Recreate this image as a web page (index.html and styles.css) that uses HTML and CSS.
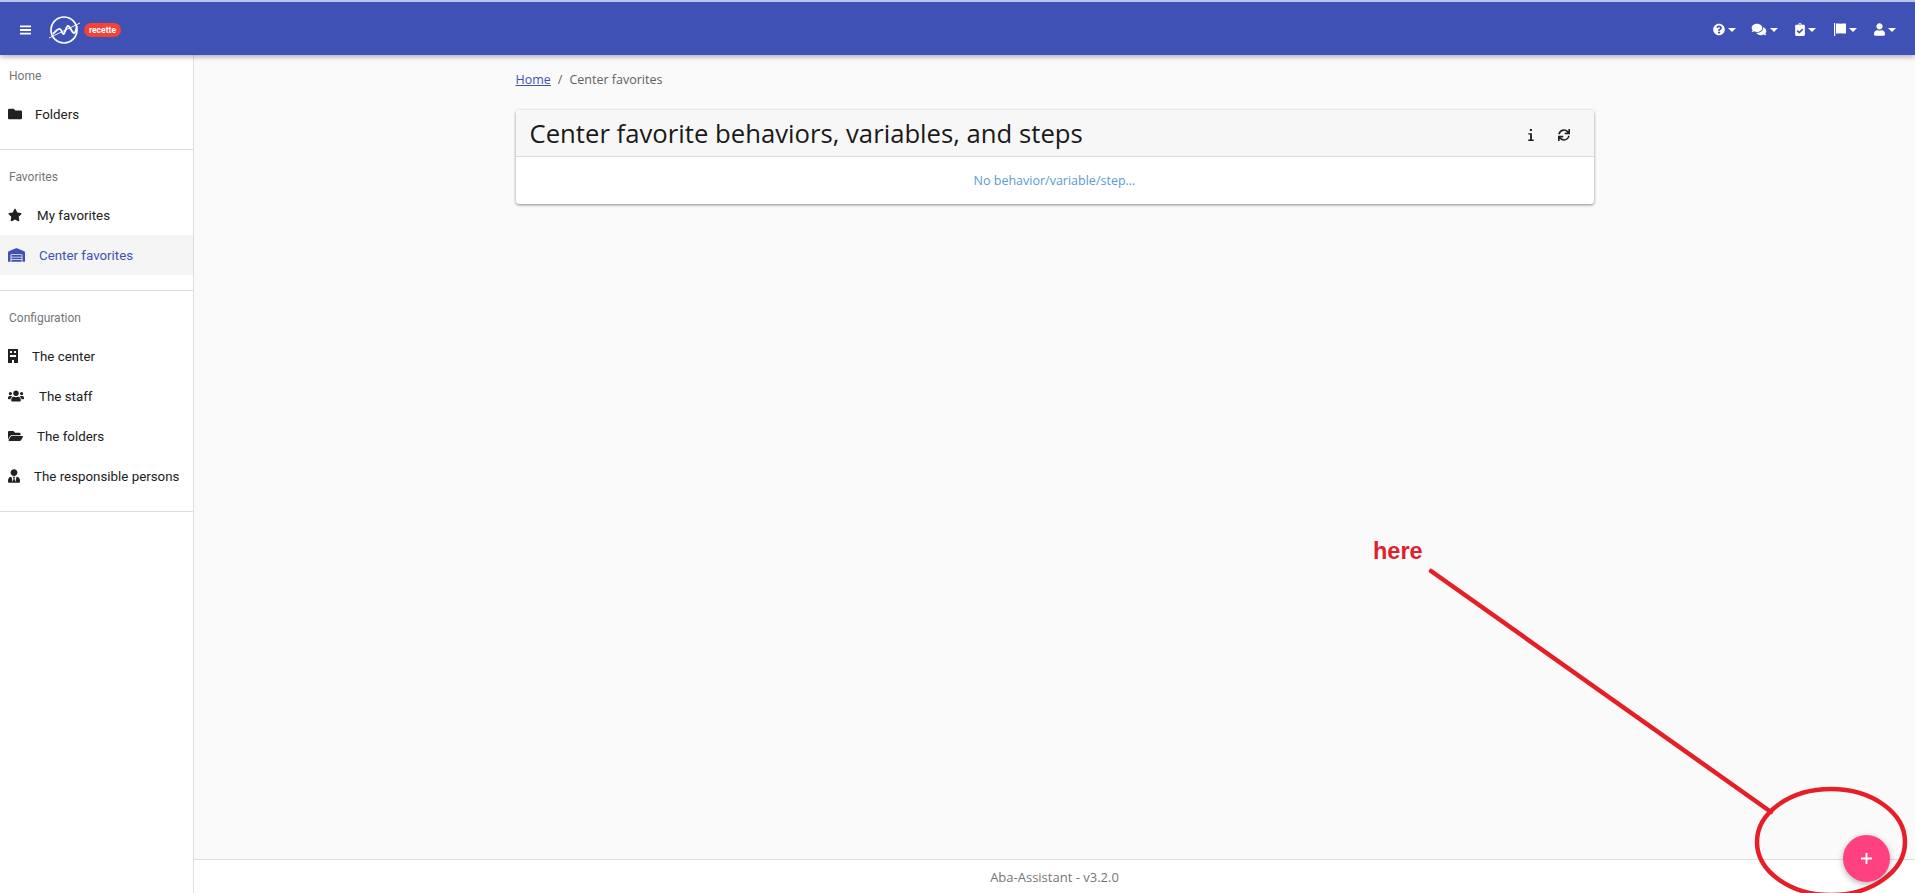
FILE: index.html
```html
<!DOCTYPE html>
<html lang="en">
<head>
  <meta charset="UTF-8" />
  <title>Center favorites - Aba-Assistant</title>
  <link rel="stylesheet" href="styles.css">
</head>
<body>

  <header class="topbar">
    <div class="topbar-left">
      <svg class="menu-icon" viewBox="0 0 12 10"><path d="M0 0h12v2H0zM0 4h12v2H0zM0 8h12v2H0z"/></svg>
      <svg class="logo" viewBox="0 0 34 34" fill="none" stroke="#fff">
        <circle cx="17" cy="17" r="13" stroke-width="1.7"/>
        <path d="M2 25L33 10" stroke-width="0.9"/>
        <path d="M6 21C9 18 11 15 13 16S15 21 16.500 21 19 13 21 13 25 20 27 20 29 15 30 13" stroke-width="1.8"/>
      </svg>
      <span class="env-badge">recette</span>
    </div>
    <nav class="topbar-right">
      <button class="top-btn btn-help"><svg viewBox="0 0 512 512"><path d="M504 256c0 136.997-111.043 248-248 248S8 392.997 8 256C8 119.083 119.043 8 256 8s248 111.083 248 248zM262.655 90c-54.497 0-89.255 22.957-116.549 63.758-3.536 5.286-2.353 12.415 2.715 16.258l34.699 26.31c5.205 3.947 12.621 3.008 16.665-2.122 17.864-22.658 30.113-35.797 57.303-35.797 20.429 0 45.698 13.148 45.698 32.958 0 14.976-12.363 22.667-32.534 33.976C247.128 238.528 216 254.941 216 296v4c0 6.627 5.373 12 12 12h56c6.627 0 12-5.373 12-12v-1.333c0-28.462 83.186-29.647 83.186-106.667 0-58.002-60.165-102-116.531-102zM256 338c-25.365 0-46 20.635-46 46 0 25.364 20.635 46 46 46s46-20.636 46-46c0-25.365-20.635-46-46-46z"/></svg><i class="caret"></i></button>
      <button class="top-btn btn-chat"><svg viewBox="0 0 576 512"><path d="M416 192c0-88.4-93.1-160-208-160S0 103.6 0 192c0 34.3 14.1 65.9 38 92-13.4 30.2-35.5 54.2-35.8 54.5-2.2 2.3-2.8 5.7-1.5 8.7S4.8 352 8 352c36.6 0 66.9-12.3 88.7-25 32.2 15.7 70.3 25 111.3 25 114.9 0 208-71.6 208-160zm122 220c23.9-26 38-57.7 38-92 0-66.9-53.5-124.2-129.3-148.1.9 6.6 1.3 13.3 1.3 20.1 0 105.9-107.7 192-240 192-10.8 0-21.3-.8-31.7-1.9C207.8 439.6 281.8 480 368 480c41 0 79.1-9.2 111.3-25 21.8 12.7 52.1 25 88.7 25 3.2 0 6.1-1.9 7.3-4.8 1.3-2.9.7-6.3-1.5-8.7-.3-.3-22.4-24.2-35.8-54.5z"/></svg><i class="caret"></i></button>
      <button class="top-btn btn-tasks"><svg viewBox="0 0 384 512"><path d="M336 64h-80c0-35.3-28.7-64-64-64s-64 28.7-64 64H48C21.5 64 0 85.5 0 112v352c0 26.5 21.5 48 48 48h288c26.5 0 48-21.5 48-48V112c0-26.5-21.5-48-48-48zM192 40c13.3 0 24 10.7 24 24s-10.7 24-24 24-24-10.7-24-24 10.7-24 24-24zm121.2 231.8l-143 141.8c-4.7 4.7-12.3 4.6-17-.1l-82.6-83.3c-4.7-4.7-4.6-12.3.1-17L99.1 285c4.7-4.7 12.3-4.6 17 .1l46 46.4 106-105.2c4.7-4.7 12.3-4.6 17 .1l28.2 28.4c4.7 4.8 4.6 12.3-.1 17z"/></svg><i class="caret"></i></button>
      <button class="top-btn btn-flag"><svg viewBox="0 0 12 13"><path d="M0 0h1.200v13H0zM2 .5h3l1 .3 2-.3h4v10H8l-2-.3-1 .3H2z"/></svg><i class="caret"></i></button>
      <button class="top-btn btn-user"><svg viewBox="0 0 448 512"><path d="M224 256c70.7 0 128-57.3 128-128S294.7 0 224 0 96 57.3 96 128s57.3 128 128 128zm89.6 32h-16.7c-22.2 10.2-46.9 16-72.9 16s-50.6-5.8-72.9-16h-16.7C60.2 288 0 348.2 0 422.4V464c0 26.5 21.5 48 48 48h352c26.5 0 48-21.5 48-48v-41.6c0-74.2-60.2-134.4-134.4-134.4z"/></svg><i class="caret"></i></button>
    </nav>
  </header>

  <div class="page">
    <aside class="sidebar">
      <section class="side-group">
        <h3 class="side-title">Home</h3>
        <a class="side-item gap-folders"><svg viewBox="0 0 512 512"><path d="M464 128H272l-64-64H48C21.49 64 0 85.49 0 112v288c0 26.51 21.49 48 48 48h416c26.51 0 48-21.49 48-48V176c0-26.51-21.49-48-48-48z"/></svg>Folders</a>
      </section>
      <section class="side-group">
        <h3 class="side-title">Favorites</h3>
        <a class="side-item gap-my"><svg viewBox="0 0 576 512"><path d="M259.3 17.8L194 150.2 47.9 171.5c-26.2 3.8-36.7 36.1-17.7 54.6l105.7 103-25 145.5c-4.5 26.3 23.2 46 46.4 33.7L288 439.6l130.7 68.7c23.2 12.2 50.9-7.4 46.4-33.7l-25-145.5 105.7-103c19-18.5 8.5-50.8-17.7-54.6L382 150.2 316.7 17.8c-11.7-23.6-45.6-23.9-57.4 0z"/></svg>My favorites</a>
        <a class="side-item active gap-center"><svg viewBox="0 0 640 512"><path d="M504 352H136.4c-4.4 0-8 3.6-8 8l-.1 48c0 4.4 3.6 8 8 8H504c4.4 0 8-3.6 8-8v-48c0-4.4-3.6-8-8-8zm0 96H136.1c-4.4 0-8 3.6-8 8l-.1 48c0 4.4 3.6 8 8 8h368c4.4 0 8-3.6 8-8v-48c0-4.4-3.6-8-8-8zm0-192H136.6c-4.4 0-8 3.6-8 8l-.1 48c0 4.4 3.6 8 8 8H504c4.4 0 8-3.6 8-8v-48c0-4.4-3.6-8-8-8zm106.5-139L338.4 3.7a48.15 48.15 0 0 0-36.9 0L29.5 117C11.7 124.5 0 141.9 0 161.3V504c0 4.4 3.6 8 8 8h80c4.4 0 8-3.6 8-8V256c0-17.6 14.6-32 32.6-32h382.8c18 0 32.6 14.4 32.6 32v248c0 4.4 3.6 8 8 8h80c4.4 0 8-3.6 8-8V161.3c0-19.4-11.7-36.8-29.5-44.3z"/></svg>Center favorites</a>
      </section>
      <section class="side-group">
        <h3 class="side-title">Configuration</h3>
        <a class="side-item gap-building"><svg viewBox="0 0 10 14"><path fill-rule="evenodd" d="M0 0h10v14H6v-3H4v3H0zM2 2v2h2V2zM6 2v2h2V2zM2 6v2h6V6z"/></svg>The center</a>
        <a class="side-item gap-staff"><svg viewBox="0 0 640 512"><path d="M96 224c35.3 0 64-28.7 64-64s-28.7-64-64-64-64 28.7-64 64 28.7 64 64 64zm448 0c35.3 0 64-28.7 64-64s-28.7-64-64-64-64 28.7-64 64 28.7 64 64 64zm32 32h-64c-17.6 0-33.5 7.1-45.1 18.6 40.3 22.1 68.9 62 75.1 109.4h66c17.7 0 32-14.3 32-32v-32c0-35.3-28.7-64-64-64zm-256 0c61.9 0 112-50.1 112-112S381.9 32 320 32 208 82.1 208 144s50.1 112 112 112zm76.8 32h-8.3c-20.8 10-43.9 16-68.5 16s-47.6-6-68.5-16h-8.3C179.6 288 128 339.6 128 403.2V432c0 26.5 21.5 48 48 48h288c26.5 0 48-21.5 48-48v-28.8c0-63.6-51.6-115.2-115.2-115.2zm-223.7-13.4C161.5 263.1 145.6 256 128 256H64c-35.3 0-64 28.7-64 64v32c0 17.7 14.3 32 32 32h65.9c6.3-47.4 34.9-87.3 75.2-109.4z"/></svg>The staff</a>
        <a class="side-item gap-open"><svg viewBox="0 0 576 512"><path d="M572.694 292.093L500.27 416.248A63.997 63.997 0 0 1 444.989 448H45.025c-18.523 0-30.064-20.093-20.731-36.093l72.424-124.155A64 64 0 0 1 152 256h399.964c18.523 0 30.064 20.093 20.73 36.093zM152 224h328v-48c0-26.51-21.49-48-48-48H272l-64-64H48C21.49 64 0 85.49 0 112v278.046l69.077-118.418C86.214 242.25 117.989 224 152 224z"/></svg>The folders</a>
        <a class="side-item gap-person"><svg viewBox="0 0 448 512"><path d="M224 256c70.7 0 128-57.3 128-128S294.7 0 224 0 96 57.3 96 128s57.3 128 128 128zm95.8 32.6L272 480l-32-136 32-56h-96l32 56-32 136-47.8-191.4C56.9 292 0 350.3 0 422.4V464c0 26.5 21.5 48 48 48h352c26.5 0 48-21.5 48-48v-41.6c0-72.1-56.9-130.4-128.2-133.8z"/></svg>The responsible persons</a>
      </section>
    </aside>

    <div class="main-col">
      <main class="content">
        <div class="breadcrumb"><a href="#">Home</a><span class="sep">/</span><span>Center favorites</span></div>
        <section class="card">
          <div class="card-head">
            <h1>Center favorite behaviors, variables, and steps</h1>
            <div class="card-actions">
              <svg class="act-info" viewBox="0 0 6 13"><path d="M1.800 0h2.200v2.200H1.800zM0 4.500h4V11.500h2V13H0v-1.500h2V6H0z"/></svg>
              <svg class="act-sync" viewBox="0 0 512 512"><path d="M440.65 12.57l4 82.77A247.16 247.16 0 0 0 255.83 8C134.73 8 33.91 94.92 12.29 209.82A12 12 0 0 0 24.09 224h49.05a12 12 0 0 0 11.67-9.26 175.91 175.91 0 0 1 317-56.94l-101.46-4.86a12 12 0 0 0-12.57 12v47.41a12 12 0 0 0 12 12H500a12 12 0 0 0 12-12V12a12 12 0 0 0-12-12h-47.37a12 12 0 0 0-11.98 12.57zM255.83 432a175.61 175.61 0 0 1-146-77.8l101.8 4.87a12 12 0 0 0 12.57-12v-47.4a12 12 0 0 0-12-12H12a12 12 0 0 0-12 12V500a12 12 0 0 0 12 12h47.35a12 12 0 0 0 12-12.6l-4.15-82.57A247.17 247.17 0 0 0 255.83 504c121.11 0 221.93-86.92 243.55-201.82a12 12 0 0 0-11.8-14.18h-49.05a12 12 0 0 0-11.67 9.26A175.86 175.86 0 0 1 255.83 432z"/></svg>
            </div>
          </div>
          <div class="card-body">No behavior/variable/step...</div>
        </section>
      </main>
      <footer class="footer">Aba-Assistant - v3.2.0</footer>
    </div>
  </div>

  <button class="fab" aria-label="Add"><svg viewBox="0 0 12 12"><path d="M5 0h2v5h5v2H7v5H5V7H0V5h5z"/></svg></button>

  <!-- red annotation drawn over the page -->
  <span class="note-text">here</span>
  <svg class="note-marks" viewBox="0 0 1915 893" fill="none" stroke="#e61e28" stroke-width="4.500">
    <path d="M1431 571L1771 812" stroke-linecap="round"/>
    <ellipse cx="1831" cy="842" rx="74" ry="53"/>
  </svg>

</body>
</html>
```

FILE: styles.css
```css
* {
  box-sizing: border-box;
}

html, body {
  height: 100%;
}

body {
  margin: 0;
  overflow: hidden;
  display: flex;
  flex-direction: column;
  background-color: #fafafa;
  font-family: 'Roboto', sans-serif;
  color: #212121;
}

/* top bar */
.topbar {
  flex: none;
  height: 55px;
  display: flex;
  justify-content: space-between;
  align-items: center;
  padding-top: 2px;
  background-color: #3f51b5;
  border-top: 2px solid #b9c2e6;
  box-shadow: 0 2px 5px rgba(0,0,0,0.3);
  position: relative;
  z-index: 2;
}

.topbar-left {
  display: flex;
  align-items: center;
  padding-left: 20px;
}

.menu-icon {
  width: 11px;
  height: 10px;
  fill: #fff;
}

.logo {
  width: 34px;
  height: 34px;
  margin-left: 16px;
}

.env-badge {
  margin-left: 3px;
  padding: 0 5px;
  height: 14px;
  line-height: 14px;
  border-radius: 7px;
  background-color: #f44336;
  color: #fff;
  font-size: 8.500px;
  font-weight: 700;
}

.topbar-right {
  display: flex;
  align-items: center;
  padding-right: 19px;
}

.top-btn {
  display: flex;
  align-items: center;
  gap: 3px;
  padding: 0;
  border: none;
  background: none;
}

.top-btn svg {
  height: 13px;
  fill: #fff;
}

.btn-help svg { width: 12px; }
.btn-chat { margin-left: 15px; }
.btn-chat svg { width: 16px; }
.btn-tasks { margin-left: 17px; }
.btn-tasks svg { width: 10px; }
.btn-flag { margin-left: 18px; }
.btn-flag svg { width: 12px; }
.btn-user { margin-left: 17px; }
.btn-user svg { width: 11px; }

.caret {
  width: 0;
  height: 0;
  border-left: 4px solid transparent;
  border-right: 4px solid transparent;
  border-top: 4px solid #fff;
}

/* layout */
.page {
  flex: 1;
  display: flex;
  min-height: 0;
}

.sidebar {
  flex: none;
  width: 194px;
  background-color: #fff;
  border-right: 1px solid #dedede;
}

.side-group {
  padding: 18px 0 15px;
  border-bottom: 1px solid #dedede;
}

.side-group:first-child {
  padding-top: 12px;
}

.side-title {
  margin: 0;
  padding-left: 9px;
  height: 18px;
  line-height: 18px;
  font-size: 12px;
  font-weight: 400;
  color: #757575;
}

.side-item {
  display: flex;
  align-items: center;
  height: 40px;
  padding-left: 8px;
  font-size: 13.330px;
  color: #212121;
}

.side-title + .side-item {
  margin-top: 9px;
}

.side-item svg {
  flex: none;
  height: 14px;
  width: 14px;
  fill: #212121;
}

.side-item.active {
  background-color: #f5f5f5;
  color: #3f51b5;
}

.side-item.active svg {
  width: 17px;
  fill: #3f51b5;
}

/* each entry has its own icon to text spacing */
.gap-folders svg { margin-right: 13px; }
.gap-my svg { margin-right: 15px; }
.gap-center svg { margin-right: 14px; }
.gap-building svg { width: 10px; margin-right: 14px; }
.gap-staff svg { width: 16px; margin-right: 15px; }
.gap-open svg { width: 15px; margin-right: 14px; }
.gap-person svg { width: 12px; margin-right: 14px; }

.main-col {
  flex: 1;
  display: flex;
  flex-direction: column;
  min-width: 0;
}

.content {
  flex: 1;
  width: 1078px;
  margin: 0 auto;
  padding-top: 16px;
  font-family: 'Open Sans', sans-serif;
}

.breadcrumb {
  height: 18px;
  line-height: 18px;
  font-size: 12.500px;
  color: #616161;
}

.breadcrumb a {
  color: #3f51b5;
}

.breadcrumb .sep {
  margin: 0 7px;
}

/* card */
.card {
  margin-top: 21px;
  background-color: #fff;
  border-radius: 3px;
  box-shadow: 0 1px 3px rgba(0,0,0,0.45);
}

.card-head {
  display: flex;
  justify-content: space-between;
  align-items: center;
  height: 47px;
  padding: 0 24px 0 14px;
  background-color: #f7f7f7;
  border-bottom: 1px solid #dcdcdc;
  border-radius: 3px 3px 0 0;
}

.card-head h1 {
  margin: 0;
  font-size: 25.700px;
  font-weight: 500;
  color: #1a1a1a;
}

.card-actions {
  display: flex;
  align-items: center;
  gap: 24px;
  padding-top: 3px;
}

.card-actions svg {
  height: 12px;
  fill: #212121;
}

.act-info {
  width: 6px;
}

.act-sync {
  width: 12px;
}

.card-body {
  height: 47px;
  line-height: 47px;
  text-align: center;
  font-size: 12.500px;
  color: #5b9bd5;
}

.footer {
  flex: none;
  height: 34px;
  line-height: 34px;
  background-color: #fff;
  border-top: 1px solid #dedede;
  text-align: center;
  font-family: 'Open Sans', sans-serif;
  font-size: 13px;
  color: #757575;
}

/* things lying over the page */
.fab {
  position: absolute;
  left: 1843px;
  top: 835px;
  width: 47px;
  height: 47px;
  display: flex;
  align-items: center;
  justify-content: center;
  padding: 0;
  border: none;
  border-radius: 50%;
  background-color: #ff4081;
  box-shadow: 0 2px 6px rgba(0,0,0,0.3);
  z-index: 3;
}

.fab svg {
  width: 11px;
  height: 11px;
  fill: #fff;
}

.note-text {
  position: absolute;
  left: 1373px;
  top: 538px;
  font-family: 'Liberation Sans', sans-serif;
  font-size: 23.500px;
  font-weight: 700;
  color: #e0202c;
  z-index: 4;
}

.note-marks {
  position: absolute;
  left: 0;
  top: 0;
  width: 1915px;
  height: 893px;
  pointer-events: none;
  z-index: 4;
}
```
